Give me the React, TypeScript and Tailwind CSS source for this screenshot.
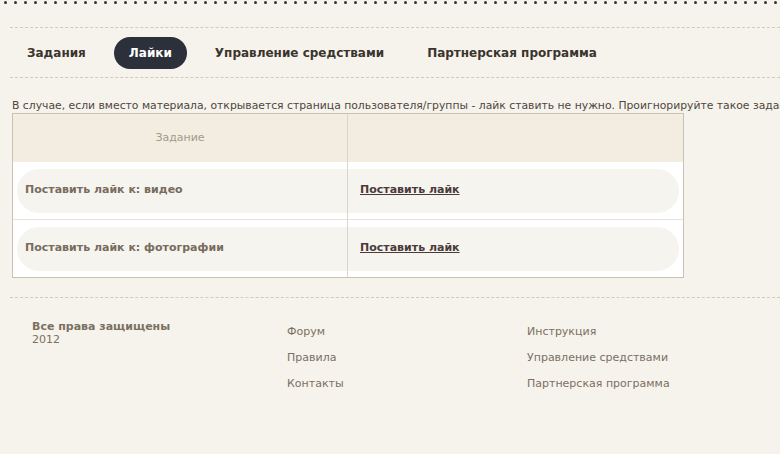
const font = "font-['DejaVu_Sans',sans-serif]"

function Dashed() {
  return <div className="ml-[10px] h-px border-t border-dashed border-[#cfcbbf]" />
}

const navItems = ['Задания', 'Лайки', 'Управление средствами', 'Партнерская программа']

const rows = ['Поставить лайк к: видео', 'Поставить лайк к: фотографии']

export default function App() {
  return (
    <div className={`h-[454px] w-[780px] overflow-hidden bg-[#f6f3ec] ${font} text-[#4f463c]`}>
      <div className="flex h-[5px] items-center gap-[7px] pl-[4px]">
        {Array.from({ length: 80 }).map((_, i) => (
          <span key={i} className="size-[3px] shrink-0 rounded-full bg-[#333333]" />
        ))}
      </div>
      <div className="pt-[22px]">
        <Dashed />
      </div>
      <nav className="flex items-center gap-[13px] pl-[12px] pt-[9px] pb-[8px]">
        {navItems.map((item) => (
          <span
            key={item}
            className={
              item === 'Лайки'
                ? 'rounded-full bg-[#2b303b] px-[15px] py-[7px] text-[12px] leading-[18px] font-bold text-white'
                : 'px-[15px] py-[7px] text-[12px] leading-[18px] font-bold text-[#3b342c]'
            }
          >
            {item}
          </span>
        ))}
      </nav>
      <Dashed />
      <p className="whitespace-nowrap pl-[12px] pt-[21px] text-[10.8px] leading-[14px] text-[#4f463c]">
        В случае, если вместо материала, открывается страница пользователя/группы - лайк ставить не нужно. Проигнорируйте такое задание.
      </p>
      <div className="ml-[12px] w-[672px] border border-[#c9c2b3] bg-white">
        <div className="grid h-[48px] grid-cols-[335px_1fr] bg-[#f3ece1]">
          <div className="flex items-center justify-center border-r border-[#ddd6c8] text-[11px] text-[#a49a88]">
            Задание
          </div>
          <div />
        </div>
        {rows.map((r, i) => (
          <div
            key={r}
            className={`relative ${i === 0 ? 'h-[58px] border-b border-[#e6e2da]' : 'h-[57px]'}`}
          >
            <div className="absolute inset-x-[4px] top-[7px] h-[44px] rounded-full bg-[#f6f4ef]" />
            <div className="relative grid h-full grid-cols-[335px_1fr]">
              <div className="flex items-center border-r border-[#ddd6c8] pl-[12px] text-[11px] font-bold text-[#776c5d]">
                {r}
              </div>
              <div className="flex items-center pl-[12px]">
                <a href="#" className="text-[11px] font-bold text-[#4b3a3a] underline">
                  Поставить лайк
                </a>
              </div>
            </div>
          </div>
        ))}
      </div>
      <div className="pt-[19px]">
        <Dashed />
      </div>
      <footer className="grid grid-cols-[255px_240px_1fr] pl-[32px] pt-[22px] text-[11px] text-[#7a7062]">
        <div className="leading-[13px]">
          <div className="font-bold">Все права защищены</div>
          <div>2012</div>
        </div>
        <div className="flex flex-col gap-[12px] pt-[5px] leading-[14px]">
          <a href="#">Форум</a>
          <a href="#">Правила</a>
          <a href="#">Контакты</a>
        </div>
        <div className="flex flex-col gap-[12px] pt-[5px] leading-[14px]">
          <a href="#">Инструкция</a>
          <a href="#">Управление средствами</a>
          <a href="#">Партнерская программа</a>
        </div>
      </footer>
    </div>
  )
}
